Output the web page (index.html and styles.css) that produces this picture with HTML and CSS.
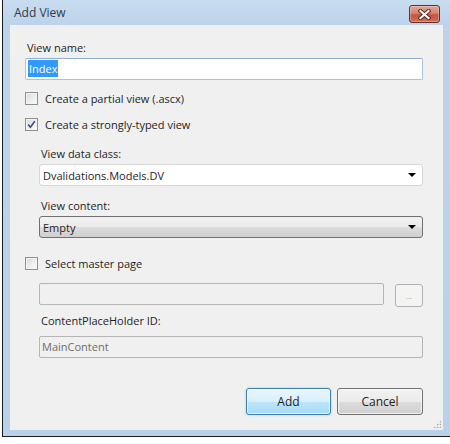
FILE: index.html
```html
<!DOCTYPE html>
<html lang="en">
<head>
    <meta charset="UTF-8">
    <meta name="viewport" content="width=device-width, initial-scale=1.0">
    <title>Add View</title>
    <link rel="stylesheet" href="styles.css">
</head>
<body>
    <div class="window">
        <div class="titlebar">
            <span class="title">Add View</span>
            <button class="close" title="Close">
                <svg width="13" height="11" viewBox="0 0 13 11">
                    <path d="M2.5 2 L10.5 9 M10.5 2 L2.5 9" stroke="#5a2218" stroke-width="4" stroke-linecap="square"/>
                    <path d="M2.5 2 L10.5 9 M10.5 2 L2.5 9" stroke="#ffffff" stroke-width="2.2" stroke-linecap="square"/>
                </svg>
            </button>
        </div>

        <div class="panel">
            <div class="label">View name:</div>
            <div class="textbox focused"><span class="selected">Index</span></div>

            <div class="check"><span class="box"></span>Create a partial view (.ascx)</div>
            <div class="check">
                <span class="box">
                    <svg width="9" height="9" viewBox="0 0 9 9">
                        <path d="M1.2 4.6 L3.4 7.2 L7.8 1.2" fill="none" stroke="#34508c" stroke-width="1.6"/>
                    </svg>
                </span>
                Create a strongly-typed view
            </div>

            <div class="indent">
                <div class="label first">View data class:</div>
                <div class="combo editable">
                    <span>Dvalidations.Models.DV</span>
                    <span class="arrow"></span>
                </div>
                <div class="label">View content:</div>
                <div class="combo list">
                    <span>Empty</span>
                    <span class="arrow"></span>
                </div>
            </div>

            <div class="check master"><span class="box"></span>Select master page</div>

            <div class="indent">
                <div class="browse-row">
                    <div class="textbox disabled"></div>
                    <button class="browse" disabled>...</button>
                </div>
                <div class="label tight">ContentPlaceHolder ID:</div>
                <div class="textbox disabled">MainContent</div>
            </div>

            <div class="actions">
                <button class="btn default">Add</button>
                <button class="btn">Cancel</button>
            </div>

            <span class="grip"></span>
        </div>
    </div>
</body>
</html>
```

FILE: styles.css
```css
body {
    margin: 0;
    background-color: #fff;
    font-family: "Open Sans", "Noto Sans", sans-serif;
    font-size: 11px;
    color: #1e1e1e;
    overflow: hidden;
}

.window {
    width: 448px;
    margin-left: 2px;
    box-sizing: border-box;
    border-left: 1px solid #1b1b1b;
    border-bottom: 1px solid #1b1b1b;
    padding: 0 7px 6px 7px;
    background: linear-gradient(to bottom, #c9dcf0 0px, #bcd3eb 25px, #b9d1ea 100%);
}

/* title bar */
.titlebar {
    height: 25px;
    display: flex;
    align-items: flex-start;
    justify-content: space-between;
}

.title {
    margin: 5px 0 0 4px;
    font-size: 12px;
    line-height: 16px;
    color: #2e3b4b;
}

.close {
    width: 31px;
    height: 18px;
    margin: 5px 3px 0 0;
    padding: 0;
    border: 1px solid #6b2a22;
    border-radius: 3px;
    display: flex;
    align-items: center;
    justify-content: center;
    background: linear-gradient(to bottom, #e3a597 0%, #d6836f 45%, #c4553f 55%, #cd6e58 100%);
    box-shadow: inset 0 0 0 1px rgba(255, 255, 255, 0.3);
}

/* dialog body */
.panel {
    position: relative;
    background-color: #f0f0f0;
    padding: 15px 20px 15px 15px;
}

.label {
    line-height: 15px;
    height: 15px;
    padding-left: 2px;
}

.indent .label {
    margin-top: 12px;
}

.indent .label.first {
    margin-top: 14px;
}

.indent .label.tight {
    margin-top: 6px;
}

.textbox {
    height: 22px;
    margin-top: 3px;
    box-sizing: border-box;
    border: 1px solid #c6cdd6;
    border-top-color: #aeb5be;
    border-radius: 2px;
    background-color: #fff;
    padding: 1px 2px;
    line-height: 18px;
}

.textbox.focused {
    border-color: #a9c3de;
    border-top-color: #8fafd2;
}

.selected {
    display: inline-block;
    background-color: #3399ff;
    color: #fff;
    line-height: 17px;
    padding: 0 1px;
}

.textbox.disabled {
    background-color: #f0f0f0;
    border-color: #b5b5b5;
    color: #6d6d6d;
}

.check {
    display: flex;
    align-items: center;
    height: 15px;
    line-height: 15px;
    margin-top: 11px;
}

.check.master {
    margin-top: 18px;
}

.box {
    width: 13px;
    height: 13px;
    box-sizing: border-box;
    margin-right: 7px;
    border: 1px solid #8e8f8f;
    background: linear-gradient(135deg, #d9d9d9 0%, #f3f3f3 70%, #fbfbfb 100%);
    box-shadow: inset 0 0 0 1px #f4f4f4;
    display: flex;
    align-items: center;
    justify-content: center;
}

.indent {
    margin-left: 14px;
}

.combo {
    height: 22px;
    margin-top: 3px;
    box-sizing: border-box;
    display: flex;
    align-items: center;
    justify-content: space-between;
    padding: 0 6px 0 3px;
    border-radius: 3px;
}

.combo.editable {
    background-color: #fff;
    border: 1px solid #d6d6d6;
}

.combo.list {
    border: 1px solid #707070;
    background: linear-gradient(to bottom, #f2f2f2 0%, #ebebeb 50%, #dddddd 51%, #cfcfcf 100%);
}

.arrow {
    width: 0;
    height: 0;
    border-left: 4px solid transparent;
    border-right: 4px solid transparent;
    border-top: 4px solid #000;
}

.browse-row {
    display: flex;
    align-items: flex-start;
    margin-top: 12px;
}

.browse-row .textbox {
    flex: 1;
    margin-top: 0;
}

.browse {
    width: 28px;
    height: 23px;
    margin: 1px 0 0 11px;
    padding: 0 0 6px 0;
    border: 1px solid #adb2b5;
    border-radius: 3px;
    background-color: #f4f4f4;
    color: #a0a0a0;
    font-family: inherit;
    font-size: 8px;
    line-height: 1;
    display: flex;
    align-items: flex-end;
    justify-content: center;
}

.indent .textbox.disabled:last-child {
    margin-top: 8px;
}

.actions {
    display: flex;
    justify-content: flex-end;
    gap: 6px;
    margin-top: 30px;
}

.btn {
    width: 86px;
    height: 27px;
    padding: 0;
    font-family: inherit;
    font-size: 12px;
    color: #1e1e1e;
    border: 1px solid #707070;
    border-radius: 3px;
    background: linear-gradient(to bottom, #f2f2f2 0%, #ebebeb 50%, #dddddd 51%, #cfcfcf 100%);
    box-shadow: inset 0 0 0 1px rgba(255, 255, 255, 0.7);
}

.btn.default {
    width: 85px;
    border-color: #3c7fb1;
    background: linear-gradient(to bottom, #eaf6fd 0%, #d9f0fc 50%, #bee6fd 51%, #a7d9f5 100%);
    box-shadow: inset 0 0 0 1px rgba(255, 255, 255, 0.7), 0 0 2px #7fc4ef;
}

/* resize grip dots */
.grip {
    position: absolute;
    right: 2px;
    bottom: 2px;
    width: 8px;
    height: 8px;
    background:
        radial-gradient(circle, #a9a9a9 0.8px, transparent 1.1px) 0 0 / 3px 3px;
    clip-path: polygon(100% 0, 100% 100%, 0 100%);
}
```
